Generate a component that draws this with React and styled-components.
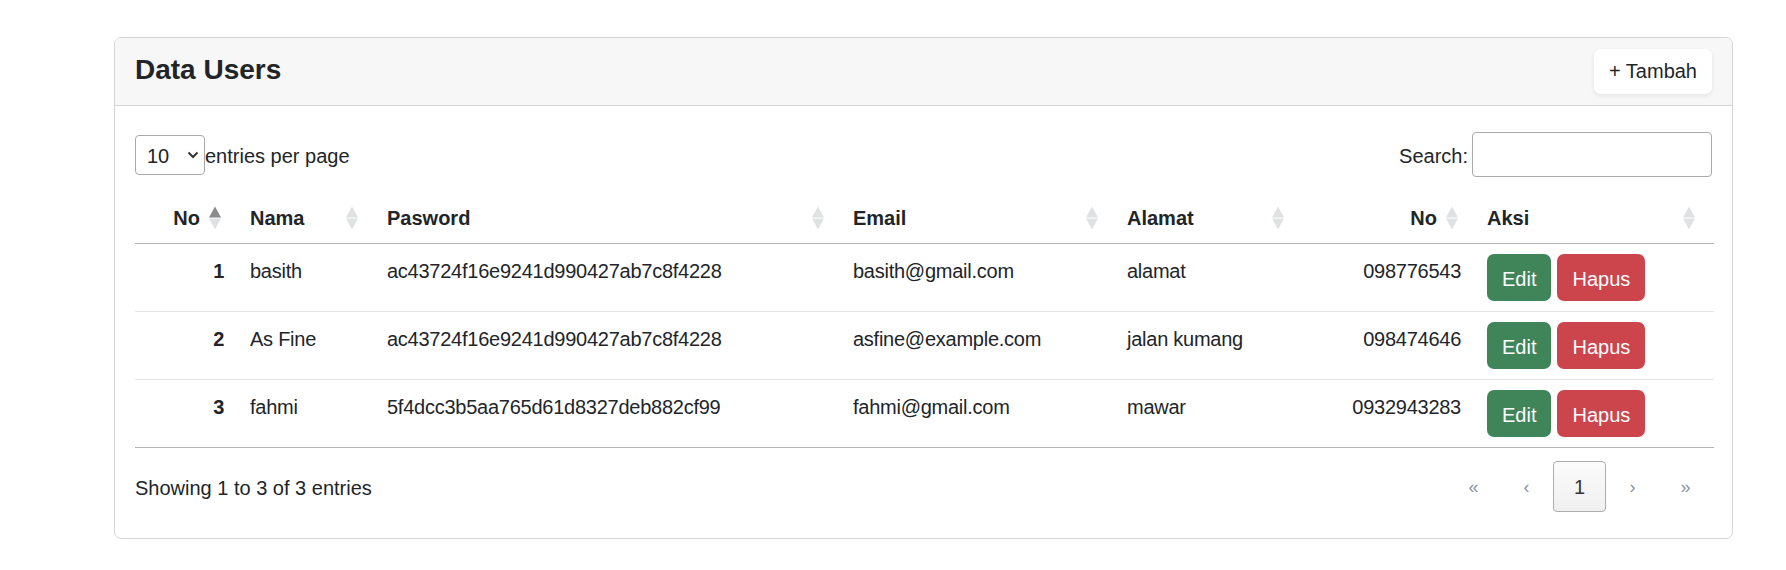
import React from "react";
import styled, { createGlobalStyle } from "styled-components";

const GlobalStyle = createGlobalStyle`
  * { box-sizing: border-box; }
  body {
    margin: 0;
    background: #fff;
    font-family: "Liberation Sans", Arial, sans-serif;
    font-size: 20px;
    color: #212529;
  }
`;

const Page = styled.div`
  padding: 37px 53px 30px 114px;
`;

const Card = styled.div`
  width: 1619px;
  border: 1px solid #d4d4d4;
  border-radius: 7px;
  background: #fff;
  overflow: hidden;
`;

const CardHeader = styled.div`
  display: flex;
  align-items: center;
  justify-content: space-between;
  padding: 11px 20px;
  background: #f7f7f7;
  border-bottom: 1px solid #d4d4d4;
`;

const Title = styled.h4`
  margin: 0 0 4px;
  font-size: 28px;
  font-weight: 700;
  color: #212529;
`;

const AddButton = styled.button`
  height: 45px;
  padding: 0 15px;
  border: none;
  border-radius: 7px;
  background: #fff;
  box-shadow: 0 2px 5px rgba(0, 0, 0, 0.08);
  font-family: inherit;
  font-size: 20px;
  color: #212529;
  cursor: pointer;
`;

const CardBody = styled.div`
  padding: 20px;
`;

const Controls = styled.div`
  display: flex;
  align-items: center;
  justify-content: space-between;
  padding-top: 6px;
  margin-bottom: 16px;
`;

const PerPage = styled.label`
  display: flex;
  align-items: center;
`;

const ControlText = styled.span`
  padding-top: 4px;
`;

const SelectWrap = styled.div`
  position: relative;
  width: 70px;
  height: 40px;
`;

const Select = styled.select`
  appearance: none;
  width: 100%;
  height: 100%;
  padding: 2px 0 0 11px;
  border: 1px solid #a9a9a9;
  border-radius: 4px;
  background: #fff;
  font-family: inherit;
  font-size: 20px;
  color: #212529;
`;

const Chevron = styled.svg`
  position: absolute;
  right: 6px;
  top: 16px;
  pointer-events: none;
`;

const SearchLabel = styled.label`
  display: flex;
  align-items: center;
  gap: 4px;
`;

const SearchInput = styled.input`
  width: 240px;
  height: 45px;
  border: 1px solid #a9a9a9;
  border-radius: 4px;
  font-family: inherit;
  font-size: 20px;
  padding: 0 10px;
`;

const Table = styled.table`
  width: 100%;
  table-layout: fixed;
  border-collapse: collapse;
  border-bottom: 1px solid #b3b3b3;
`;

const Th = styled.th`
  position: relative;
  padding: 10px 40px 10px 10px;
  line-height: 30px;
  font-weight: 700;
  text-align: ${p => (p.right ? "right" : "left")};
  border-bottom: 1px solid #b3b3b3;
`;

const Sorter = styled.span`
  position: absolute;
  right: 19px;
  top: 50%;
  transform: translateY(-50%);
  display: flex;
  flex-direction: column;
  gap: 1px;
  &::before,
  &::after {
    content: "";
    width: 0;
    height: 0;
    border-left: 6.5px solid transparent;
    border-right: 6.5px solid transparent;
  }
  &::before {
    border-bottom: 11px solid ${p => (p.asc ? "#8a8a8a" : "#e0e1e2")};
  }
  &::after {
    border-top: 11px solid #e0e1e2;
  }
`;

const Tr = styled.tr`
  & + & td {
    border-top: 1px solid #e2e4e7;
  }
`;

const Td = styled.td`
  padding: 10px ${p => (p.right ? "16px" : "10px")} 10px 10px;
  line-height: 34px;
  vertical-align: top;
  text-align: ${p => (p.right ? "right" : "left")};
  font-weight: ${p => (p.bold ? 700 : 400)};
  letter-spacing: -0.25px;
  white-space: nowrap;
`;

const Actions = styled.div`
  display: flex;
  gap: 6px;
`;

const ActionButton = styled.button`
  height: 47px;
  padding: 3px 15px 0;
  border: none;
  border-radius: 7px;
  background: ${p => (p.danger ? "#cc454c" : "#40855a")};
  color: #fff;
  font-family: inherit;
  font-size: 20px;
  cursor: pointer;
`;

const Footer = styled.div`
  display: flex;
  align-items: center;
  justify-content: space-between;
  padding: 13px 0 6px;
`;

const Info = styled.span`
  padding-top: 4px;
`;

const Pager = styled.ul`
  display: flex;
  margin: 0;
  padding: 0;
  list-style: none;
`;

const PageItem = styled.li`
  width: 53px;
  height: 51px;
  display: flex;
  align-items: center;
  justify-content: center;
  padding-top: 2px;
  border: 1px solid ${p => (p.active ? "#adadad" : "transparent")};
  border-radius: 4px;
  background: ${p => (p.active ? "linear-gradient(#fbfbfb, #f0f0f0)" : "transparent")};
  color: ${p => (p.active ? "#333" : "#8a93a0")};
  font-size: ${p => (p.active ? "20px" : "18px")};
`;

const columns = [
  { label: "No", width: 105, right: true, asc: true },
  { label: "Nama", width: 137 },
  { label: "Pasword", width: 466 },
  { label: "Email", width: 274 },
  { label: "Alamat", width: 186 },
  { label: "No", width: 174, right: true },
  { label: "Aksi", width: 237 },
];

const users = [
  { no: 1, nama: "basith", pass: "ac43724f16e9241d990427ab7c8f4228", email: "basith@gmail.com", alamat: "alamat", hp: "098776543" },
  { no: 2, nama: "As Fine", pass: "ac43724f16e9241d990427ab7c8f4228", email: "asfine@example.com", alamat: "jalan kumang", hp: "098474646" },
  { no: 3, nama: "fahmi", pass: "5f4dcc3b5aa765d61d8327deb882cf99", email: "fahmi@gmail.com", alamat: "mawar", hp: "0932943283" },
];

export default function App() {
  return (
    <Page>
      <GlobalStyle />
      <Card>
        <CardHeader>
          <Title>Data Users</Title>
          <AddButton>+ Tambah</AddButton>
        </CardHeader>
        <CardBody>
          <Controls>
            <PerPage>
              <SelectWrap>
                <Select defaultValue="10">
                  <option>5</option>
                  <option>10</option>
                  <option>15</option>
                </Select>
                <Chevron width="12" height="8" viewBox="0 0 12 8">
                  <path d="M1.5 1.5 L6 6 L10.5 1.5" fill="none" stroke="#333" strokeWidth="2" />
                </Chevron>
              </SelectWrap>
              <ControlText>entries per page</ControlText>
            </PerPage>
            <SearchLabel>
              <ControlText>Search:</ControlText>
              <SearchInput type="search" />
            </SearchLabel>
          </Controls>

          <Table>
            <colgroup>
              {columns.map((c, i) => (
                <col key={i} style={{ width: c.width }} />
              ))}
            </colgroup>
            <thead>
              <tr>
                {columns.map((c, i) => (
                  <Th key={i} right={c.right}>
                    {c.label}
                    <Sorter asc={c.asc} />
                  </Th>
                ))}
              </tr>
            </thead>
            <tbody>
              {users.map(u => (
                <Tr key={u.no}>
                  <Td right bold>{u.no}</Td>
                  <Td>{u.nama}</Td>
                  <Td>{u.pass}</Td>
                  <Td>{u.email}</Td>
                  <Td>{u.alamat}</Td>
                  <Td right>{u.hp}</Td>
                  <Td>
                    <Actions>
                      <ActionButton>Edit</ActionButton>
                      <ActionButton danger>Hapus</ActionButton>
                    </Actions>
                  </Td>
                </Tr>
              ))}
            </tbody>
          </Table>

          <Footer>
            <Info>Showing 1 to 3 of 3 entries</Info>
            <Pager>
              <PageItem>«</PageItem>
              <PageItem>‹</PageItem>
              <PageItem active>1</PageItem>
              <PageItem>›</PageItem>
              <PageItem>»</PageItem>
            </Pager>
          </Footer>
        </CardBody>
      </Card>
    </Page>
  );
}
